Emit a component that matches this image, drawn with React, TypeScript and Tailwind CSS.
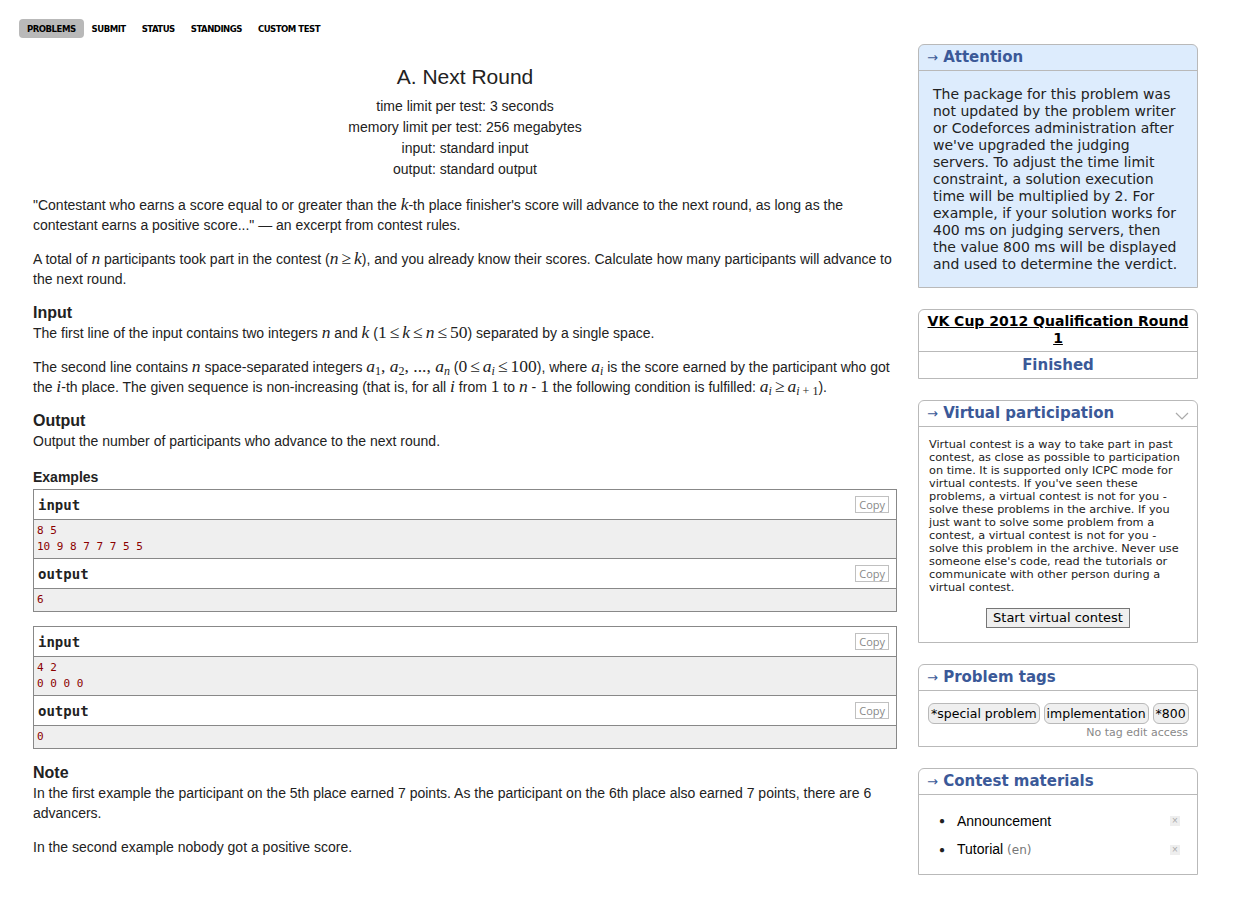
import React from 'react';

const sans = "font-['Liberation_Sans',Arial,sans-serif]";
const verd = "font-['DejaVu_Sans',Verdana,sans-serif]";
const mono = "font-['DejaVu_Sans_Mono','Liberation_Mono',monospace]";

function M({ children }: { children: React.ReactNode }) {
  return <span className="font-['Liberation_Serif',serif] text-[17.5px] leading-[14px] whitespace-nowrap">{children}</span>;
}
function V({ children }: { children: React.ReactNode }) {
  return <i className="font-['Liberation_Serif',serif]">{children}</i>;
}
function S({ children }: { children: React.ReactNode }) {
  return <sub className="text-[12px] leading-[10px]">{children}</sub>;
}
function R({ children }: { children: React.ReactNode }) {
  return <span className="mx-[3px]">{children}</span>;
}

function Copy() {
  return (
    <span className="border border-[#c0c0c0] px-[3px] text-[11px] leading-[15px] text-[#888] font-['Open_Sans',sans-serif]">
      Copy
    </span>
  );
}

function Sample({ input, output }: { input: string[]; output: string[] }) {
  const head = 'flex items-center justify-between h-[30px] pl-[4px] pr-[7px] border-b border-[#888] bg-white';
  const body = `bg-[#efefef] px-[3px] py-[3px] text-[11px] leading-[16px] text-[#8b0000] ${mono}`;
  return (
    <div className="border border-[#888] mb-[14px]">
      <div className={head}>
        <span className={`${mono} font-bold text-[14px]`}>input</span>
        <Copy />
      </div>
      <div className={`${body} border-b border-[#888]`}>
        {input.map((l, i) => (
          <div key={i}>{l}</div>
        ))}
      </div>
      <div className={head}>
        <span className={`${mono} font-bold text-[14px]`}>output</span>
        <Copy />
      </div>
      <div className={body}>
        {output.map((l, i) => (
          <div key={i}>{l}</div>
        ))}
      </div>
    </div>
  );
}

function Box({ title, children, blue, chevron }: { title?: string; children: React.ReactNode; blue?: boolean; chevron?: boolean }) {
  return (
    <div className={`border border-[#b9b9b9] rounded-t-[6px] mb-[21px] ${blue ? 'bg-[#ddecfd]' : 'bg-white'} ${verd}`}>
      {title && (
        <div className="flex items-center justify-between h-[26px] px-[8px] border-b border-[#b9b9b9]">
          <span className="text-[15px] font-bold text-[#3b5998]">
            <span className="font-normal text-[13px]">→</span> {title}
          </span>
          {chevron && (
            <svg width="14" height="10" viewBox="0 0 14 10" className="mt-[4px]">
              <path d="M1 2 L7 8 L13 2" fill="none" stroke="#aaa" strokeWidth="1.2" />
            </svg>
          )}
        </div>
      )}
      {children}
    </div>
  );
}

export default function App() {
  return (
    <div className="flex bg-white text-[#222] min-h-[897px] pl-[19px] pt-[19px]">
      <div className="w-[892px]">
        {/* menu */}
        <div className="flex font-['Liberation_Sans_Narrow','DejaVu_Sans_Condensed',sans-serif] font-bold text-[9.5px] tracking-[-0.5px] text-black">
          <span className="bg-[#b9b9b9] rounded-[4px] px-[8px] h-[19px] leading-[20px]">PROBLEMS</span>
          <span className="px-[8px] h-[19px] leading-[20px]">SUBMIT</span>
          <span className="px-[8px] h-[19px] leading-[20px]">STATUS</span>
          <span className="px-[8px] h-[19px] leading-[20px]">STANDINGS</span>
          <span className="px-[8px] h-[19px] leading-[20px]">CUSTOM TEST</span>
        </div>

        <div className={`px-[14px] text-[14px] leading-[20px] ${sans}`}>
          <div className="text-center mt-[25px] mb-[15px]">
            <div className="text-[21px] leading-[28px] mb-[5px]">A. Next Round</div>
            <div className="leading-[21px]">time limit per test: 3 seconds</div>
            <div className="leading-[21px]">memory limit per test: 256 megabytes</div>
            <div className="leading-[21px]">input: standard input</div>
            <div className="leading-[21px]">output: standard output</div>
          </div>

          <p className="mb-[14px]">
            "Contestant who earns a score equal to or greater than the <M><V>k</V></M>-th place finisher's score will advance to the next round, as long as the contestant earns a positive score..." — an excerpt from contest rules.
          </p>
          <p className="mb-[14px]">
            A total of <M><V>n</V></M> participants took part in the contest (<M><V>n</V><R>≥</R><V>k</V></M>), and you already know their scores. Calculate how many participants will advance to the next round.
          </p>

          <div className="text-[16px] font-bold leading-[20px] mt-[6px]">Input</div>
          <p className="mb-[14px]">
            The first line of the input contains two integers <M><V>n</V></M> and <M><V>k</V></M> (<M>1<R>≤</R><V>k</V><R>≤</R><V>n</V><R>≤</R>50</M>) separated by a single space.
          </p>
          <p className="mb-[14px]">
            The second line contains <M><V>n</V></M> space-separated integers <M><V>a</V><S>1</S>, <V>a</V><S>2</S>, ..., <V>a</V><S><V>n</V></S></M> (<M>0<R>≤</R><V>a</V><S><V>i</V></S><R>≤</R>100</M>), where <M><V>a</V><S><V>i</V></S></M> is the score earned by the participant who got the <M><V>i</V></M>-th place. The given sequence is non-increasing (that is, for all <M><V>i</V></M> from <M>1</M> to <M><V>n</V></M> - <M>1</M> the following condition is fulfilled: <M><V>a</V><S><V>i</V></S><R>≥</R><V>a</V><S><V>i</V> + 1</S></M>).
          </p>

          <div className="text-[16px] font-bold leading-[20px] mt-[6px]">Output</div>
          <p className="mb-[14px]">Output the number of participants who advance to the next round.</p>

          <div className="font-bold mt-[16px] mb-[2px]">Examples</div>
          <Sample input={['8 5', '10 9 8 7 7 7 5 5']} output={['6']} />
          <Sample input={['4 2', '0 0 0 0']} output={['0']} />

          <div className="text-[16px] font-bold leading-[20px] mt-[2px]">Note</div>
          <p className="mb-[14px]">
            In the first example the participant on the 5th place earned 7 points. As the participant on the 6th place also earned 7 points, there are 6 advancers.
          </p>
          <p>In the second example nobody got a positive score.</p>
        </div>
      </div>

      <div className="w-[280px] ml-[7px] mt-[25px]">
        <Box title="Attention" blue>
          <div className="px-[14px] pt-[15px] pb-[14px] text-[14px] leading-[17px] text-[#222]">
            The package for this problem was not updated by the problem writer or Codeforces administration after we've upgraded the judging servers. To adjust the time limit constraint, a solution execution time will be multiplied by 2. For example, if your solution works for 400 ms on judging servers, then the value 800 ms will be displayed and used to determine the verdict.
          </div>
        </Box>

        <Box>
          <div className="text-center font-bold underline text-[14px] leading-[17px] text-black px-[6px] pt-[3px] pb-[4px] border-b border-[#b9b9b9]">
            VK Cup 2012 Qualification Round 1
          </div>
          <div className="text-center font-bold text-[15px] leading-[26px] text-[#3b5998]">Finished</div>
        </Box>

        <Box title="Virtual participation" chevron>
          <div className="px-[10px] pt-[11px] pb-[14px] text-[11.3px] leading-[13px]">
            <div>
              Virtual contest is a way to take part in past contest, as close as possible to participation on time. It is supported only ICPC mode for virtual contests. If you've seen these problems, a virtual contest is not for you - solve these problems in the archive. If you just want to solve some problem from a contest, a virtual contest is not for you - solve this problem in the archive. Never use someone else's code, read the tutorials or communicate with other person during a virtual contest.
            </div>
            <div className="flex justify-center mt-[14px]">
              <button className="border border-[#767676] bg-[#efefef] px-[6px] h-[20px] text-[13px] leading-[18px] text-black">
                Start virtual contest
              </button>
            </div>
          </div>
        </Box>

        <Box title="Problem tags">
          <div className="px-[9px] pt-[12px] pb-[6px]">
            <div className="flex gap-[4px] text-[12.5px] whitespace-nowrap">
              {['*special problem', 'implementation', '*800'].map((t) => (
                <span key={t} className="border border-[#b9b9b9] rounded-[6px] bg-[#efefef] px-[2px] h-[21px] leading-[19px] text-black">
                  {t}
                </span>
              ))}
            </div>
            <div className="text-right text-[11px] leading-[14px] text-[#888] mt-[2px]">No tag edit access</div>
          </div>
        </Box>

        <Box title="Contest materials">
          <ul className={`px-[10px] pt-[12px] pb-[10px] ${sans} text-[14px] leading-[28px]`}>
            {[
              ['Announcement', ''],
              ['Tutorial', '(en)'],
            ].map(([a, b]) => (
              <li key={a} className="flex items-center">
                <span className="w-[28px] pl-[10px] text-[10px]">●</span>
                <span className="flex-1 text-black">
                  {a} {b && <span className={`text-[#777] text-[12px] ${verd}`}>{b}</span>}
                </span>
                <span className="w-[10px] h-[10px] bg-[#eee] flex items-center justify-center text-[10px] leading-[10px] text-[#aaa] mr-[7px]">×</span>
              </li>
            ))}
          </ul>
        </Box>
      </div>
    </div>
  );
}
